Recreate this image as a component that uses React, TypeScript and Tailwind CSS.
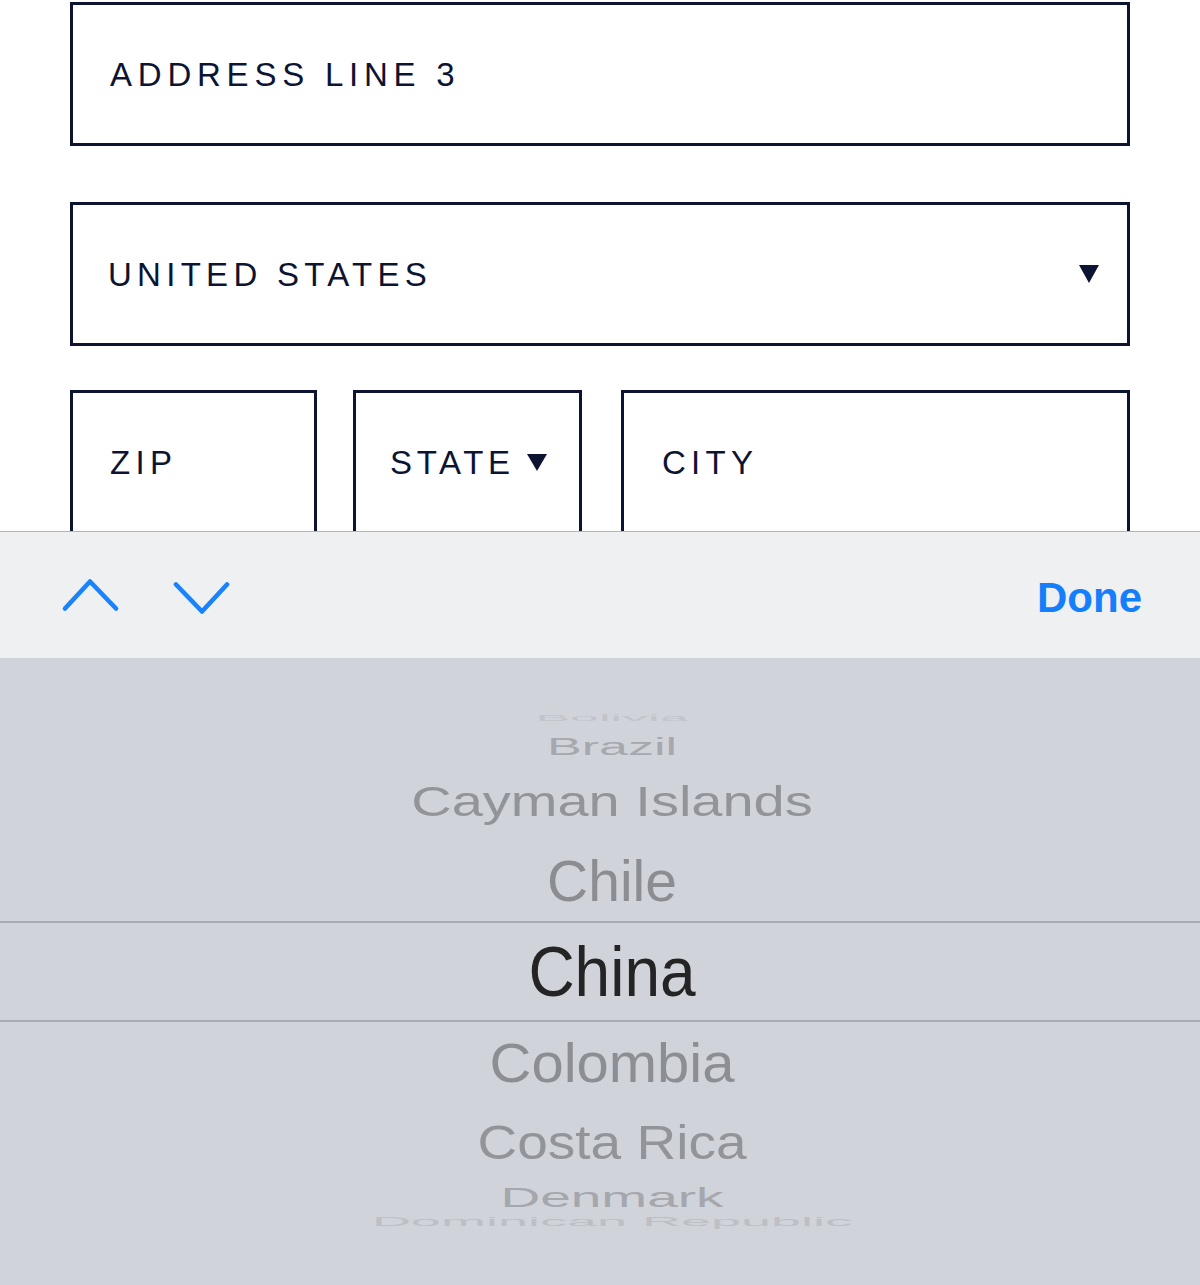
const navy = "text-[#0d1432]"

type Row = { name: string; h: string; size: string; scale: string; color: string }

const rows: Row[] = [
  { name: "Bolivia", h: "h-[28px]", size: "text-[52px]", scale: "scale-y-[0.19]", color: "text-[#c2c4ca]" },
  { name: "Brazil", h: "h-[29px]", size: "text-[52px]", scale: "scale-y-[0.45]", color: "text-[#a6a8ae]" },
  { name: "Cayman Islands", h: "h-[80px]", size: "text-[56px]", scale: "scale-y-[0.77]", color: "text-[#939499]" },
  { name: "Chile", h: "h-[80px]", size: "text-[57px]", scale: "scale-y-[1]", color: "text-[#8c8d92]" },
]

const rowsBelow: Row[] = [
  { name: "Colombia", h: "h-[82px]", size: "text-[58px]", scale: "scale-y-[0.96]", color: "text-[#8d8e93]" },
  { name: "Costa Rica", h: "h-[77px]", size: "text-[55px]", scale: "scale-y-[0.88]", color: "text-[#939499]" },
  { name: "Denmark", h: "h-[32px]", size: "text-[55px]", scale: "scale-y-[0.5]", color: "text-[#a5a7ad]" },
  { name: "Dominican Republic", h: "h-[18px]", size: "text-[54px]", scale: "scale-y-[0.22]", color: "text-[#bdbfc5]" },
]

function PickerRow({ row }: { row: Row }) {
  return (
    <div className={`${row.h} flex items-center justify-center pl-[24px]`}>
      <span className={`${row.size} ${row.scale} ${row.color} leading-none whitespace-nowrap`}>{row.name}</span>
    </div>
  )
}

function Field({ label, className, arrow, tracking }: { label: string; className?: string; arrow?: "far" | "near"; tracking?: string }) {
  return (
    <div className={`h-[144px] shrink-0 border-[3px] border-[#0d1432] flex items-center ${className ?? ""}`}>
      <span className={`text-[33px] ${tracking ?? "tracking-[0.16em]"} leading-none ${navy}`}>{label}</span>
      {arrow === "near" && (
        <svg width="20" height="17" viewBox="0 0 20 17" className="ml-[12px]">
          <path d="M0 0 H20 L10 17 Z" fill="#0d1432" />
        </svg>
      )}
      {arrow === "far" && (
        <svg width="20" height="18" viewBox="0 0 20 18" className="ml-auto mr-[28px]">
          <path d="M0 0 H20 L10 18 Z" fill="#0d1432" />
        </svg>
      )}
    </div>
  )
}

export default function App() {
  return (
    <div className="w-[1200px] h-[1285px] bg-white flex flex-col overflow-hidden font-['Liberation_Sans',Arial,sans-serif]">
      {/* form behind the keyboard */}
      <div className="h-[531px] shrink-0 overflow-hidden px-[70px] pt-[2px] flex flex-col">
        <Field label="ADDRESS LINE 3" className="pl-[37px]" tracking="tracking-[0.175em]" />
        <Field label="UNITED STATES" className="mt-[56px] pl-[35px]" arrow="far" />
        <div className="mt-[44px] flex">
          <Field label="ZIP" className="w-[247px] pl-[37px]" />
          <Field label="STATE" className="w-[229px] ml-[36px] pl-[34px]" arrow="near" tracking="tracking-[0.14em]" />
          <Field label="CITY" className="flex-1 ml-[39px] pl-[38px]" />
        </div>
      </div>

      {/* keyboard toolbar */}
      <div className="h-[127px] shrink-0 bg-[#eff0f2] border-t border-[#b4b5ba] flex items-center justify-between pl-[60px] pr-[58px]">
        <div className="flex items-center gap-[52px]">
          <svg width="60" height="37" viewBox="0 0 60 37" fill="none">
            <path d="M5 31.5 L30 4.5 L56 31.5" stroke="#1a82fb" strokeWidth="4.6" strokeLinecap="round" strokeLinejoin="round" />
          </svg>
          <svg width="60" height="37" viewBox="0 0 60 37" fill="none">
            <path d="M4 7.5 L30 34.5 L55 7.5" stroke="#1a82fb" strokeWidth="4.6" strokeLinecap="round" strokeLinejoin="round" />
          </svg>
        </div>
        <span className="text-[42px] font-bold leading-none text-[#157efb] pt-[6px]">Done</span>
      </div>

      {/* picker wheel */}
      <div className="flex-1 bg-[#d0d3da] flex flex-col">
        <div className="h-[46px] shrink-0" />
        {rows.map((r) => (
          <PickerRow key={r.name} row={r} />
        ))}
        <div className="h-[101px] shrink-0 border-y-2 border-[#a9abb1] flex items-center justify-center pl-[24px]">
          <span className="text-[64px] scale-y-[1.1] leading-none text-[#242424]">China</span>
        </div>
        {rowsBelow.map((r) => (
          <PickerRow key={r.name} row={r} />
        ))}
      </div>
    </div>
  )
}
